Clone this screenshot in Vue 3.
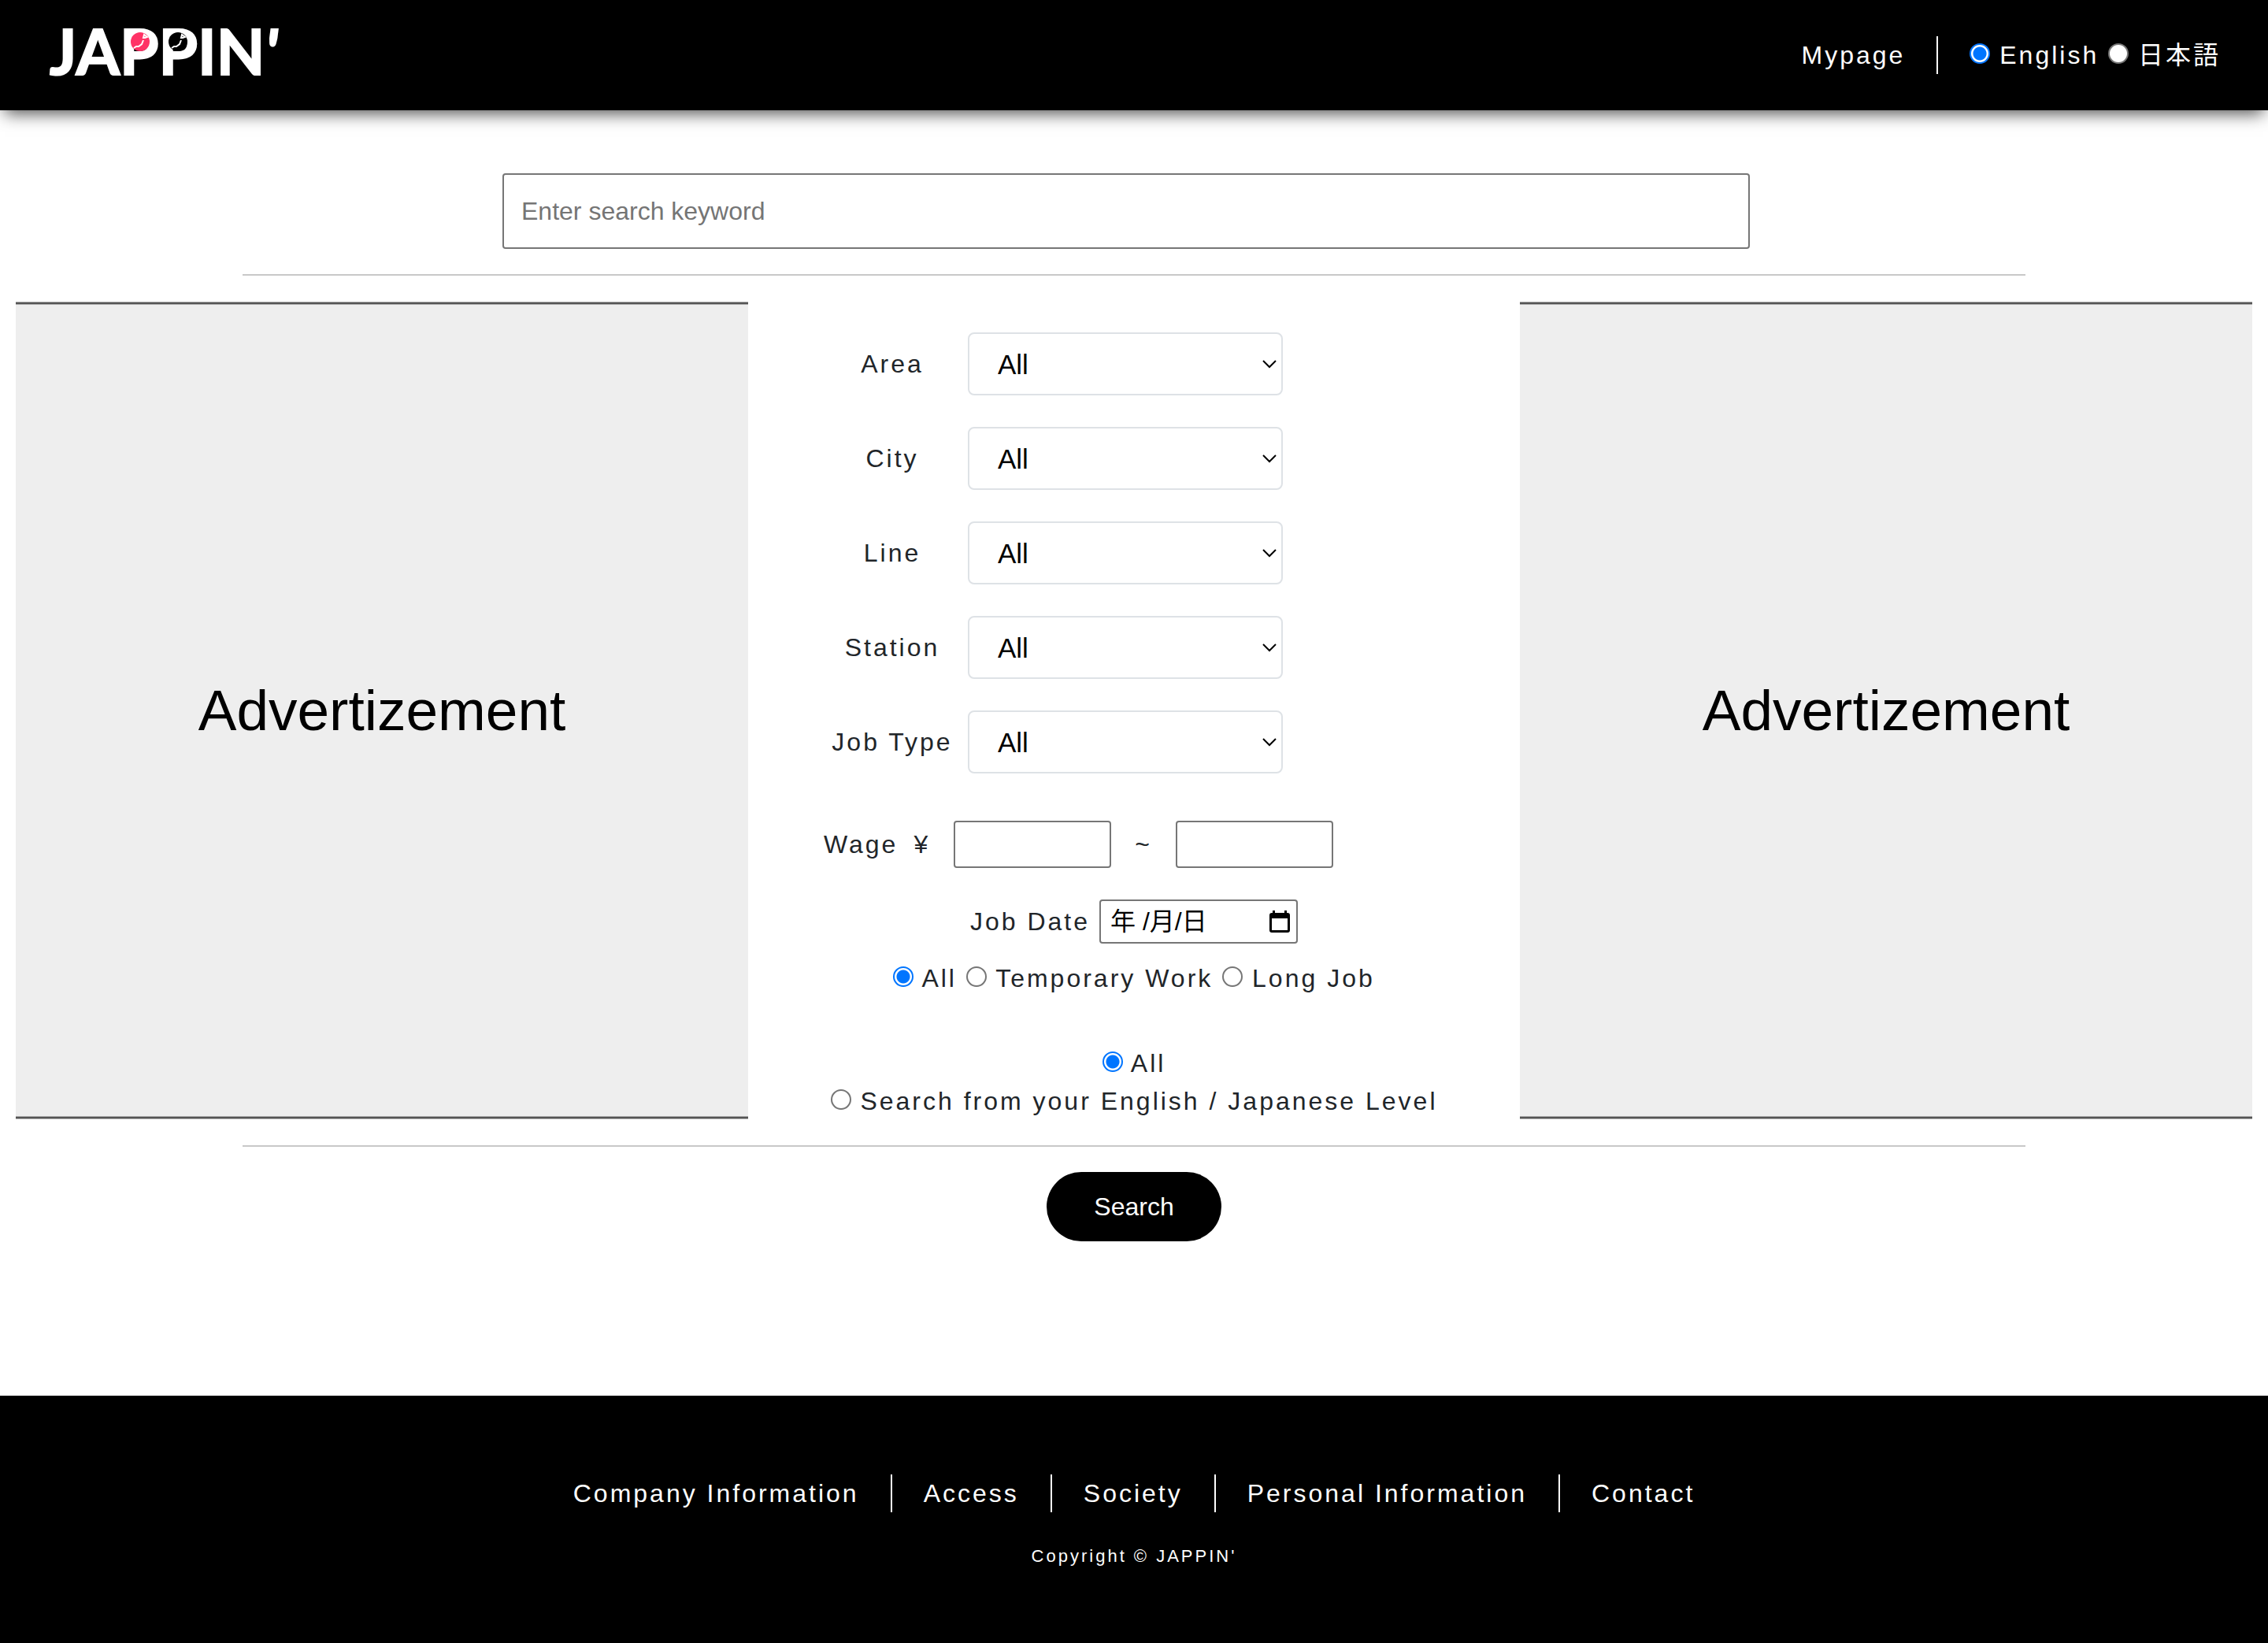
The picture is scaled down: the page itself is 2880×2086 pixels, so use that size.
<script setup>
import { ref } from 'vue'

const lang = ref('en')
const keyword = ref('')
const term = ref('all')
const level = ref('all')
const jobDate = ref('')
const filters = ['Area', 'City', 'Line', 'Station', 'Job Type']
const links = ['Company Information', 'Access', 'Society', 'Personal Information', 'Contact']
</script>

<template>
  <div class="page">
    <header class="header">
      <a class="logo" href="#" aria-label="JAPPIN' home">
        <svg class="logo-art" width="340" height="120" viewBox="0 0 340 120">
          <text class="logo-text" x="3" y="85">JAPPIN<tspan font-style="italic">'</tspan></text>
          <g transform="translate(118 43)">
            <circle r="12" fill="#ff3366" />
            <path class="japan" d="M-8 8l3-2 3 0 4-3 2-5M4-5l1-4 4 3-3 1z" />
          </g>
          <g transform="translate(166 43)">
            <circle r="12" fill="#000" />
            <path class="japan" d="M-8 8l3-2 3 0 4-3 2-5M4-5l1-4 4 3-3 1z" />
          </g>
        </svg>
      </a>
      <ul class="nav">
        <li><a href="#">Mypage</a></li>
        <li>
          <input id="lang-en" v-model="lang" type="radio" name="lang" value="en">
          <label for="lang-en"> English </label>
          <input id="lang-ja" v-model="lang" type="radio" name="lang" value="ja">
          <label for="lang-ja"> 日本語</label>
        </li>
      </ul>
    </header>

    <main>
      <form @submit.prevent>
        <div class="keyword">
          <input v-model="keyword" class="keyword-input" type="text" placeholder="Enter search keyword" aria-label="Search keyword">
        </div>
        <hr>
        <div class="columns">
          <aside class="ad">Advertizement</aside>
          <div class="conditions">
            <div class="fields">
              <div v-for="name in filters" :key="name" class="field">
                <label :for="name">{{ name }}</label>
                <span class="select-box">
                  <select :id="name"><option>All</option></select>
                  <svg class="chevron" width="18" height="11" viewBox="0 0 18 11"><path d="M1 1l8 8 8-8" /></svg>
                </span>
              </div>
              <div class="wage">
                <label for="wage-min">Wage</label>
                <span class="yen">¥</span>
                <input id="wage-min" class="wage-input" type="text">
                <span class="tilde">~</span>
                <input class="wage-input" type="text" aria-label="Maximum wage">
              </div>
            </div>
            <div class="date">
              <label for="job-date">Job Date</label>
              <span class="date-box">
                <input id="job-date" v-model="jobDate" type="text" placeholder="年 /月/日">
                <svg class="calendar" width="26" height="28" viewBox="0 0 26 28">
                  <path fill-rule="evenodd" d="M4 0h3v3h12V0h3v3h1a3 3 0 0 1 3 3v19a3 3 0 0 1-3 3H3a3 3 0 0 1-3-3V6a3 3 0 0 1 3-3h1zM3 10v15h20V10z" />
                </svg>
              </span>
            </div>
            <div class="term">
              <input id="term-all" v-model="term" type="radio" name="term" value="all">
              <label for="term-all"> All </label>
              <input id="term-temp" v-model="term" type="radio" name="term" value="temp">
              <label for="term-temp"> Temporary Work </label>
              <input id="term-long" v-model="term" type="radio" name="term" value="long">
              <label for="term-long"> Long Job</label>
            </div>
            <div>
              <input id="level-all" v-model="level" type="radio" name="level" value="all">
              <label for="level-all"> All</label>
            </div>
            <div>
              <input id="level-own" v-model="level" type="radio" name="level" value="own">
              <label for="level-own"> Search from your English / Japanese Level</label>
            </div>
          </div>
          <aside class="ad">Advertizement</aside>
        </div>
        <hr>
        <button class="submit" type="submit">Search</button>
      </form>
    </main>

    <footer class="footer">
      <ul class="nav">
        <li v-for="link in links" :key="link"><a href="#">{{ link }}</a></li>
      </ul>
      <p class="copyright">Copyright © JAPPIN'</p>
    </footer>
  </div>
</template>

<style>
body {
  background: #fff;
}
</style>

<style scoped>
.page {
  display: flex;
  flex-direction: column;
  min-height: 100vh;
  font-family: "Liberation Sans", "Noto Sans CJK JP", sans-serif;
  font-size: 32px;
  line-height: 48px;
  letter-spacing: 3px;
  color: #212529;
}
input,
select,
button {
  box-sizing: border-box;
  margin: 0;
  font-family: inherit;
  font-size: 32px;
}
.header {
  display: flex;
  align-items: center;
  justify-content: space-between;
  height: 140px;
  padding: 0 20px 0 60px;
  background: #000;
  color: #fff;
  box-shadow: 0 10px 20px -6px rgba(0, 0, 0, 0.7);
}
.logo-art {
  display: block;
  overflow: visible;
}
.logo-text {
  font-family: Lato, sans-serif;
  font-weight: 700;
  font-size: 80px;
  letter-spacing: 0;
  fill: #fff;
  stroke: #fff;
  stroke-width: 2;
}
.japan {
  fill: none;
  stroke: #fff;
  stroke-width: 2;
}
.nav {
  display: flex;
  margin: 0;
  padding: 0;
  list-style: none;
}
.nav li {
  padding: 0 40px;
}
.nav li + li {
  border-left: 2px solid #fff;
}
.nav a {
  color: #fff;
  text-decoration: none;
}
input[type="radio"] {
  appearance: none;
  width: 26px;
  height: 26px;
  border: 2px solid #767676;
  border-radius: 50%;
  background: #fff;
}
input[type="radio"]:checked {
  border-color: #0075ff;
  background: radial-gradient(circle, #0075ff 8px, #fff 9px);
}
main {
  flex: 1;
  padding: 80px 20px 0;
}
.keyword {
  display: flex;
  justify-content: center;
  padding-right: 20px;
}
.keyword-input {
  width: 1584px;
  max-width: 100%;
  height: 96px;
  padding: 0 22px;
  border: 2px solid #767676;
  border-radius: 4px;
}
.keyword-input::placeholder {
  color: #757575;
}
hr {
  width: 80%;
  max-width: 2264px;
  height: 2px;
  margin: 32px auto;
  border: 0;
  background: #c8c8c8;
}
.columns {
  display: grid;
  grid-template-columns: 93fr 98fr 93fr;
}
.ad {
  display: flex;
  align-items: center;
  justify-content: center;
  margin: 1px 0;
  background:
    linear-gradient(#aaa 1px, #555 1px, #555 3px, #aaa 3px) top / 100% 4px no-repeat,
    linear-gradient(#aaa 1px, #555 1px, #555 3px, #aaa 3px) bottom / 100% 4px no-repeat,
    #eee;
  font-size: 73px;
  letter-spacing: 0;
  color: #000;
}
.conditions {
  padding-top: 40px;
  text-align: center;
}
.fields {
  max-width: 806px;
  margin: 0 auto;
}
.field {
  display: grid;
  grid-template-columns: 192px 400px;
  align-items: center;
  margin-bottom: 40px;
}
.select-box,
.date-box {
  display: grid;
  align-items: center;
}
.select-box > *,
.date-box > * {
  grid-area: 1 / 1;
}
select {
  appearance: none;
  width: 100%;
  height: 80px;
  padding: 0 36px;
  border: 2px solid #dee2e6;
  border-radius: 8px;
  background: #fff;
  color: #000;
  font-size: 35px;
}
.chevron {
  justify-self: end;
  margin-right: 8px;
  fill: none;
  stroke: #000;
  stroke-width: 2;
  pointer-events: none;
}
.wage {
  display: flex;
  align-items: center;
  padding: 20px 0 40px 9px;
}
.yen {
  margin: 0 30px 0 20px;
}
.tilde {
  margin: 0 30px;
}
.wage-input {
  width: 200px;
  height: 60px;
  border: 2px solid #767676;
  border-radius: 4px;
}
.date {
  display: flex;
  align-items: center;
  justify-content: center;
  gap: 12px;
  margin-bottom: 20px;
}
.date-box {
  width: 252px;
}
.date-box input {
  width: 100%;
  height: 56px;
  padding: 0 12px;
  border: 2px solid #767676;
  border-radius: 4px;
}
.date-box input::placeholder {
  color: #000;
}
.calendar {
  justify-self: end;
  margin-right: 10px;
}
.term {
  margin-bottom: 60px;
}
.submit {
  display: block;
  height: 88px;
  margin: 0 auto;
  padding: 0 60px;
  border: 0;
  border-radius: 44px;
  background: #000;
  color: #fff;
}
.footer {
  padding: 100px 0 86px;
  background: #000;
  color: #fff;
}
.footer .nav {
  justify-content: center;
}
.copyright {
  margin: 32px 0 0;
  font-size: 22px;
  text-align: center;
}
</style>
